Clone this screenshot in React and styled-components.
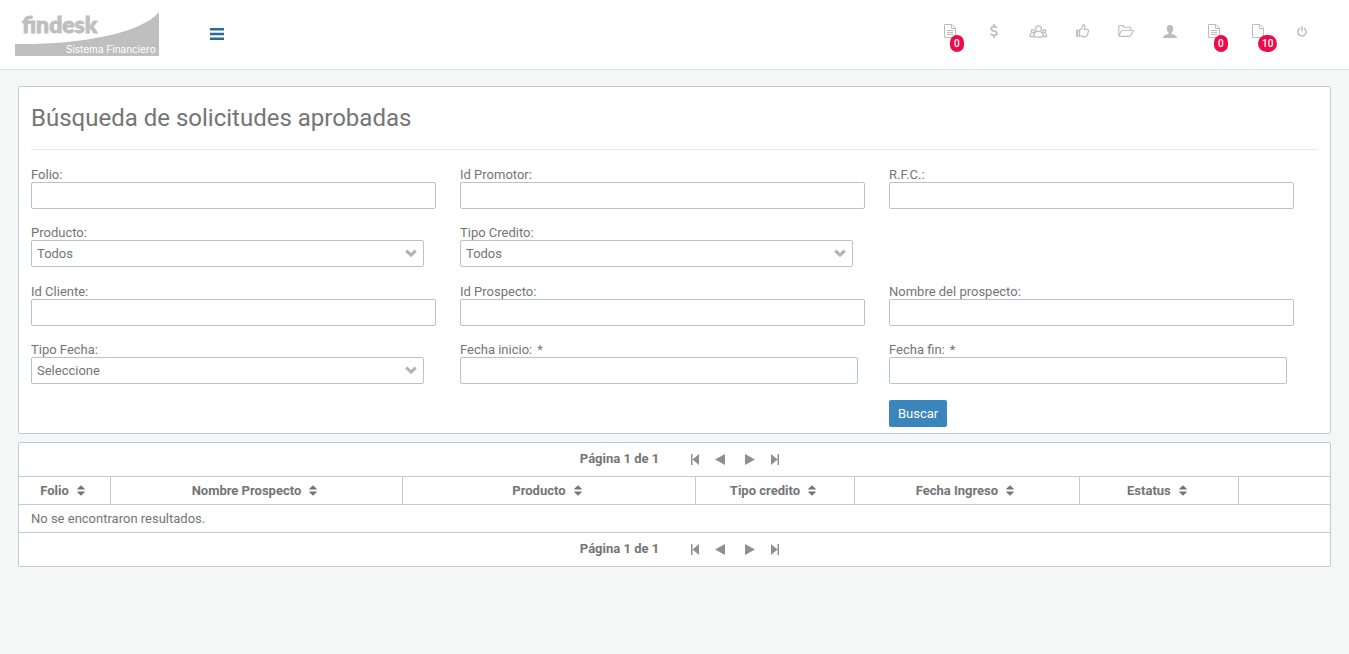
import React, { useState } from 'react'
import styled, { createGlobalStyle } from 'styled-components'

const fieldGroups = [
  [
    { id: 'folio', label: 'Folio:' },
    { id: 'idPromotor', label: 'Id Promotor:' },
    { id: 'rfc', label: 'R.F.C.:' },
    { id: 'producto', label: 'Producto:', type: 'select', options: ['Todos'] },
    { id: 'tipoCredito', label: 'Tipo Credito:', type: 'select', options: ['Todos'] },
  ],
  [
    { id: 'idCliente', label: 'Id Cliente:' },
    { id: 'idProspecto', label: 'Id Prospecto:' },
    { id: 'nombre', label: 'Nombre del prospecto:' },
    { id: 'tipoFecha', label: 'Tipo Fecha:', type: 'select', options: ['Seleccione'] },
    { id: 'fechaInicio', label: 'Fecha inicio:', type: 'date', required: true },
    { id: 'fechaFin', label: 'Fecha fin:', type: 'date', required: true },
  ],
]

const columns = [
  { title: 'Folio', width: '6.94%' },
  { title: 'Nombre Prospecto', width: '22.27%' },
  { title: 'Producto', width: '22.35%' },
  { title: 'Tipo credito', width: '12.13%' },
  { title: 'Fecha Ingreso', width: '17.16%' },
  { title: 'Estatus', width: '12.13%' },
  { title: '', width: '7.02%' },
]

const FileIcon = ({ lines }) => (
  <svg width='12' height='14' viewBox='0 0 12 14' fill='none' stroke='currentColor'>
    <path d='M.5.5H8L11.5 4v9.5H.5zM7.5.5v4h4' />
    {lines && <path d='M3 6.5h6M3 8.5h6M3 10.5h6' />}
  </svg>
)

const DollarIcon = () => (
  <svg width='8' height='14' viewBox='0 0 8 14' fill='none' stroke='currentColor' strokeWidth='1.8'>
    <path d='M7 4C6.400 3 5.300 2.600 4 2.600 2.300 2.600 1.200 3.400 1.200 4.700c0 3.100 5.800 1.500 5.800 4.600 0 1.300-1.300 2.100-3 2.100-1.400 0-2.600-.5-3.400-1.500M4 0v2.600M4 11.400V14' />
  </svg>
)

const UsersIcon = () => (
  <svg width='18' height='13' viewBox='0 0 18 13' fill='none' stroke='currentColor' strokeWidth='1.3'>
    <circle cx='9.500' cy='3.800' r='2.900' />
    <path d='M7.300 6.800C5.500 7.200 4.800 8.600 4.800 10.300c0 1.200.8 1.800 2 1.800h5.400c1.200 0 2-.6 2-1.800 0-1.700-.7-3.100-2.500-3.500' />
    <circle cx='3.700' cy='6.200' r='1.500' />
    <circle cx='15.300' cy='6.200' r='1.500' />
    <path d='M2.300 8.200C1.500 8.600 1.200 9.400 1.200 10.600v.9h3.600M16.700 8.200c.6.400.7 1.200.7 2.400v.9h-3.200' />
  </svg>
)

const ThumbIcon = () => (
  <svg width='13' height='14' viewBox='0 0 13 14' fill='none' stroke='currentColor' strokeWidth='1.200' strokeLinejoin='round'>
    <path d='M3.500 6.300C5 5.500 6.500 3.800 6.700 1.800 6.800.9 7.400.6 8 .7c1.400.3 1.100 2.600.2 4.600h3c1.200 0 1.600 1 1 1.800.3.700.1 1.400-.4 1.800.2.700 0 1.300-.6 1.700.1 1.600-.8 2.200-2.200 2.200-2 0-3-.8-5.500-1.100z' />
    <path d='M.6 6.200h2.900v5.900H.6z' />
    <path d='M1.500 7v4.500' />
  </svg>
)

const FolderIcon = () => (
  <svg width='16' height='12' viewBox='0 0 16 12' fill='none' stroke='currentColor' strokeWidth='1.100' strokeLinejoin='round'>
    <path d='M.8 10.500V1.500c0-.6.3-.9.900-.9h3.100c.6 0 .9.300.9.900v.7h6.200c.6 0 .9.300.9.900v2.100' />
    <path d='M4.300 5.300h10.200c.8 0 1 .4.600 1l-2.600 4.300c-.3.500-.7.800-1.300.8H1.600c-.8 0-1-.5-.6-1.100l2.200-4.200c.3-.5.600-.8 1.100-.8z' />
  </svg>
)

const PersonIcon = () => (
  <svg width='14' height='13' viewBox='0 0 14 13' fill='currentColor'>
    <path d='M7 0C4.800 0 3.700 1.300 3.800 3.500c.1 2 .8 3.400 1.700 4.100v1.200C4.500 9.600 0 9.800 0 13h14c0-3.200-4.500-3.400-5.500-4.200V7.600c.9-.7 1.600-2.100 1.700-4.100C10.300 1.300 9.200 0 7 0z' />
  </svg>
)

const PowerIcon = () => (
  <svg width='10' height='11' viewBox='0 0 10 11' fill='none' stroke='currentColor' strokeWidth='1.500'>
    <path d='M3.200 2.200a4.100 4.100 0 1 0 3.600 0M5 .3v5.200' />
  </svg>
)

const SortIcon = () => (
  <svg width='8' height='11' viewBox='0 0 8 11' fill='currentColor'>
    <path d='M4 .2 7.700 3.700q.4.800-.5.900H.8Q-.1 4.500.3 3.700zM4 10.800 7.700 7.300q.4-.8-.5-.9H.8q-.9.100-.5.900z' />
  </svg>
)

const ChevronIcon = () => (
  <svg width='12' height='9' viewBox='0 0 12 9' fill='none' stroke='currentColor' strokeWidth='3'>
    <path d='M1.300 1.700 6 6.200l4.700-4.500' />
  </svg>
)

const MenuIcon = () => (
  <svg width='14' height='12' viewBox='0 0 14 12' fill='currentColor'>
    <path d='M0 0h14v2.400H0zM0 4.800h14v2.400H0zM0 9.600h14V12H0z' />
  </svg>
)

const pagerPaths = {
  first: 'M1 0h1.500v11H1zM9 0v11L2.500 5.500z',
  prev: 'M10 0v11L0 5.500z',
  next: 'M0 0v11l10-5.500z',
  last: 'M1 0v11l6.500-5.500zM7.500 0H9v11H7.500z',
}

const Logo = () => (
  <svg width='144' height='44' viewBox='0 0 144 44'>
    <path fill='#bfbfbf' d='M0 32C58 33 125 23 144 0V44H0z' />
    <text className='brand' x='7' y='21'>findesk</text>
    <text className='slogan' x='51' y='41'>Sistema Financiero</text>
  </svg>
)

const navItems = [
  { name: 'Solicitudes', icon: <FileIcon lines />, count: 0 },
  { name: 'Pagos', icon: <DollarIcon /> },
  { name: 'Grupos', icon: <UsersIcon /> },
  { name: 'Aprobadas', icon: <ThumbIcon /> },
  { name: 'Expedientes', icon: <FolderIcon /> },
  { name: 'Usuario', icon: <PersonIcon /> },
  { name: 'Documentos', icon: <FileIcon lines />, count: 0 },
  { name: 'Pendientes', icon: <FileIcon />, count: 10 },
  { name: 'Salir', icon: <PowerIcon /> },
]

const Field = ({ field, value, onChange }) => (
  <Cell $type={field.type}>
    <label htmlFor={field.id}>
      {field.label}
      {field.required && <span>*</span>}
    </label>
    {field.type === 'select' ? (
      <SelectBox>
        <select id={field.id} value={value} onChange={onChange}>
          {field.options.map((option) => <option key={option}>{option}</option>)}
        </select>
        <ChevronIcon />
      </SelectBox>
    ) : (
      <input id={field.id} type='text' value={value} onChange={onChange} />
    )}
  </Cell>
)

const Pager = () => (
  <Pagination>
    <p>Página 1 de 1</p>
    {['first', 'prev', 'next', 'last'].map((name) => (
      <button key={name} type='button' className={name} aria-label={name}>
        <svg width='10' height='11' viewBox='0 0 10 11' fill='currentColor'>
          <path d={pagerPaths[name]} />
        </svg>
      </button>
    ))}
  </Pagination>
)

const App = () => {
  const [values, setValues] = useState({})

  const handleChange = (e) => {
    setValues({ ...values, [e.target.id]: e.target.value })
  }

  return (
    <>
      <GlobalStyle />
      <Header>
        <LogoLink href='#' aria-label='findesk'><Logo /></LogoLink>
        <MenuButton type='button' aria-label='Menú'><MenuIcon /></MenuButton>
        <Nav>
          {navItems.map((item) => (
            <NavLink key={item.name} href='#' aria-label={item.name}>
              {item.icon}
              {item.count !== undefined && <Badge>{item.count}</Badge>}
            </NavLink>
          ))}
        </Nav>
      </Header>
      <Main>
        <SearchPanel onSubmit={(e) => e.preventDefault()}>
          <h1>Búsqueda de solicitudes aprobadas</h1>
          <hr />
          {fieldGroups.map((group, i) => (
            <FieldGrid key={i}>
              {group.map((field) => (
                <Field
                  key={field.id}
                  field={field}
                  value={values[field.id] ?? field.options?.[0] ?? ''}
                  onChange={handleChange}
                />
              ))}
            </FieldGrid>
          ))}
          <Actions>
            <SearchButton type='submit'>Buscar</SearchButton>
          </Actions>
        </SearchPanel>
        <Results>
          <Pager />
          <Table>
            <colgroup>
              {columns.map((col, i) => <Col key={i} $width={col.width} />)}
            </colgroup>
            <thead>
              <tr>
                {columns.map((col, i) => (
                  <th key={i}>{col.title && <>{col.title}<SortIcon /></>}</th>
                ))}
              </tr>
            </thead>
            <tbody>
              <tr>
                <td colSpan={columns.length}>No se encontraron resultados.</td>
              </tr>
            </tbody>
          </Table>
          <Pager />
        </Results>
      </Main>
    </>
  )
}

export default App

const GlobalStyle = createGlobalStyle`
  * {
    box-sizing: border-box;
  }

  body{
    margin: 0;
    background-color: #f5f7f7;
    color: #757575;
    font-family: Roboto, sans-serif;
    font-size: 13px;
    line-height: 16px;
  }

  button, input, select{
    font: inherit;
    color: inherit;
  }

  svg{
    display: block;
    flex: none;
  }
`;

const Header = styled.header`
  display: flex;
  align-items: center;
  height: 70px;
  padding: 0 25px 1px 15px;
  background-color: #fff;
  border-bottom: 1px solid #dee1e6;
`;

const LogoLink = styled.a`
  svg{
    overflow: visible;
  }

  .brand{
    font: 900 23px Lato, sans-serif;
    fill: #bfbfbf;
    stroke: #bfbfbf;
    stroke-width: 1;
  }

  .slogan{
    font: 10px Inter, sans-serif;
    fill: #fff;
  }
`;

const MenuButton = styled.button`
  margin-left: 41px;
  padding: 10px;
  border: none;
  background: none;
  color: #2a6a9a;
  cursor: pointer;
`;

const Nav = styled.nav`
  display: flex;
  margin-left: auto;
`;

const NavLink = styled.a`
  position: relative;
  display: flex;
  align-items: center;
  justify-content: center;
  width: 44px;
  height: 62px;
  margin-bottom: 6px;
  color: #bdbdbd;
`;

const Badge = styled.span`
  position: absolute;
  top: 35px;
  left: 22px;
  padding: 0 4px;
  border-radius: 9px;
  background-color: #ed0c48;
  color: #fff;
  font-size: 10px;
  font-weight: 500;
  line-height: 17px;
`;

const Main = styled.main`
  display: flex;
  flex-direction: column;
  gap: 8px;
  padding: 16px 18px;
`;

const SearchPanel = styled.form`
  padding: 16px 12px 6px;
  background-color: #fff;
  border: 1px solid #c5cbcf;
  border-radius: 2px;

  h1{
    margin: 0;
    font-size: 24px;
    font-weight: 400;
    line-height: 30px;
  }

  hr{
    margin: 16px 0 17px;
    border: none;
    border-top: 1px solid #e7e9eb;
  }
`;

const FieldGrid = styled.div`
  display: grid;
  grid-template-columns: repeat(3, 1fr);
  row-gap: 16px;

  & + &{
    margin-top: 17px;
  }
`;

const Cell = styled.div`
  display: flex;
  flex-direction: column;
  padding-right: ${({ $type }) => ({ select: '36px', date: '31px' }[$type] || '24px')};

  label{
    line-height: 15px;
  }

  label span{
    margin-left: 5px;
  }

  input, select{
    width: 100%;
    height: 27px;
    padding: 0 5px;
    border: 1px solid #bdc2c9;
    border-radius: 2px;
    background-color: #fff;
  }
`;

const SelectBox = styled.div`
  position: relative;

  select{
    appearance: none;
  }

  svg{
    position: absolute;
    top: 9px;
    right: 7px;
    color: #b3b3b3;
    pointer-events: none;
  }
`;

const Actions = styled.div`
  display: grid;
  grid-template-columns: repeat(3, 1fr);
  margin-top: 16px;
`;

const SearchButton = styled.button`
  grid-column: 3;
  justify-self: start;
  height: 27px;
  padding: 0 9px;
  border: none;
  border-radius: 2px;
  background-color: #3a85bb;
  color: #fff;
  cursor: pointer;
`;

const Results = styled.section`
  background-color: #fff;
  border: 1px solid #c5cbcf;
  border-radius: 2px;
`;

const Pagination = styled.div`
  display: flex;
  align-items: center;
  justify-content: center;
  gap: 5px;
  height: 33px;

  p{
    margin: 0 21px 0 16px;
    padding-bottom: 2px;
    font-weight: 700;
  }

  button{
    display: flex;
    justify-content: center;
    width: 20px;
    padding: 0;
    border: none;
    background: none;
    color: #8f8f8f;
    cursor: pointer;
  }

  .next{
    margin-left: 5px;
  }
`;

const Table = styled.table`
  width: 100%;
  table-layout: fixed;
  border-spacing: 0;
  border-top: 1px solid #c5cbcf;

  th, td{
    height: 28px;
    padding: 0 12px;
    border-bottom: 1px solid #c5cbcf;
    text-align: left;
  }

  th{
    padding-right: 16px;
    text-align: center;
    font-weight: 700;
  }

  th + th{
    border-left: 1px solid #c5cbcf;
  }

  th svg{
    display: inline-block;
    margin-left: 8px;
    vertical-align: -1px;
  }
`;

const Col = styled.col`
  width: ${({ $width }) => $width};
`;
